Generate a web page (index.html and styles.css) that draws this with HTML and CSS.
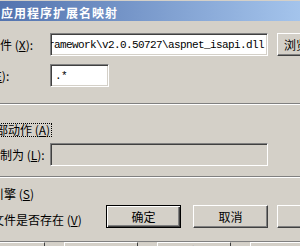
FILE: index.html
```html
<!DOCTYPE html>
<html lang="zh-CN">
<head>
    <meta charset="UTF-8">
    <title>应用程序扩展名映射</title>
    <link rel="stylesheet" href="styles.css">
</head>
<body>

    <!-- Dialog window -->
    <div class="window">
        <div class="titlebar">应用程序扩展名映射</div>

        <div class="form">
            <div class="row row-exe">
                <span class="label">可执行文件 (<u>X</u>):</span>
                <div class="edit wide"><span class="value">C:\WINDOWS\Microsoft.NET\Framework\v2.0.50727\aspnet_isapi.dll</span></div>
                <button class="btn browse">浏览(<u>B</u>)...</button>
            </div>

            <div class="row row-ext">
                <span class="label">扩展名 (<u>E</u>):</span>
                <div class="edit narrow"><span class="value">.*</span></div>
            </div>

            <div class="sep"></div>

            <div class="radio-row">
                <span class="focus">全部动作 (<u>A</u>)</span>
            </div>

            <div class="row row-limit">
                <span class="label limit">限制为 (<u>L</u>):</span>
                <div class="edit wide disabled"></div>
            </div>

            <div class="sep sep-low"></div>

            <!-- Checkboxes and dialog buttons -->
            <div class="bottom">
                <div class="checks">
                    <div class="check first">脚本引擎 (<u>S</u>)</div>
                    <div class="check">检查文件是否存在 (<u>V</u>)</div>
                </div>
                <div class="buttons">
                    <button class="btn default">确定</button>
                    <button class="btn cancel">取消</button>
                    <button class="btn help">帮助</button>
                </div>
            </div>
        </div>
    </div>

    <!-- Buttons of the window behind -->
    <div class="behind">
        <span class="back-btn">添加(D)...</span>
        <span class="back-btn">编辑(E)...</span>
        <span class="back-btn">删除(M)</span>
        <span class="back-btn">复制</span>
    </div>

</body>
</html>
```

FILE: styles.css
```css
/* General Reset */
* {
    margin: 0;
    padding: 0;
    box-sizing: border-box;
}

body {
    width: 300px;
    height: 246px;
    overflow: hidden;
    background-color: #d4d0c8;
    font-family: "Noto Sans CJK SC", sans-serif;
    font-size: 12px;
    color: #000;
}

u {
    text-decoration: underline;
    text-underline-offset: 1px;
}

/* Window */
.window {
    height: 242px;
    padding-top: 1px;
    border-bottom: 1px solid #808080;
}

.titlebar {
    height: 20px;
    padding: 4px 0 0 1px;
    line-height: 16px;
    font-weight: bold;
    letter-spacing: 1px;
    color: #fff;
    white-space: nowrap;
    background: linear-gradient(90deg, #5373ae, #a4c4ec);
}

/* Form area, the left part of the dialog is cut off */
.form {
    margin-left: -48px;
}

.row {
    display: flex;
    align-items: center;
    height: 23px;
}

.row-exe {
    margin-top: 12px;
}

.row-ext {
    margin-top: 8px;
}

.row-limit {
    margin-top: 8px;
}

.label {
    flex: none;
    width: 98px;
    white-space: nowrap;
}

.label.limit {
    padding-left: 36px;
}

/* Sunken edit boxes */
.edit {
    flex: none;
    height: 23px;
    display: flex;
    align-items: center;
    overflow: hidden;
    background-color: #fff;
    border: 1px solid;
    border-color: #808080 #fff #fff #808080;
    box-shadow: inset 1px 1px #404040, inset -1px -1px #d4d0c8;
    font-family: "Liberation Mono", monospace;
    font-size: 11px;
    letter-spacing: -0.6px;
    white-space: nowrap;
}

.edit.wide {
    width: 218px;
    justify-content: flex-end;
    padding-right: 3px;
}

.edit.narrow {
    width: 59px;
    padding-left: 4px;
}

.edit.disabled {
    background-color: #d4d0c8;
}

.sep {
    margin-top: 16px;
    height: 2px;
    border-top: 1px solid #808080;
    border-bottom: 1px solid #fff;
    margin-left: 48px;
}

.sep-low {
    margin-top: 10px;
}

.radio-row {
    margin-top: 16px;
    height: 14px;
    padding-left: 30px;
}

.focus {
    display: inline-block;
    height: 14px;
    line-height: 12px;
    padding: 0 1px;
    border: 1px dotted #000;
    white-space: nowrap;
}

/* Bottom part */
.bottom {
    display: flex;
}

.checks {
    flex: none;
    width: 154px;
    padding-left: 16px;
}

.check {
    height: 14px;
    line-height: 14px;
    margin-top: 12px;
    white-space: nowrap;
}

.check.first {
    margin-top: 9px;
}

.buttons {
    display: flex;
    margin-top: 27px;
}

/* Raised buttons */
.btn {
    flex: none;
    width: 75px;
    height: 23px;
    font-family: inherit;
    font-size: 12px;
    color: #000;
    background-color: #d4d0c8;
    border: 1px solid;
    border-color: #fff #404040 #404040 #fff;
    box-shadow: inset -1px -1px #808080;
    white-space: nowrap;
}

.btn.browse {
    margin-left: 9px;
    text-align: left;
    padding-left: 6px;
}

.btn.default {
    border-color: #000;
    box-shadow: inset 1px 1px #fff, inset -1px -1px #404040, inset -2px -2px #808080;
}

.btn.cancel {
    margin-left: 12px;
}

.btn.help {
    margin-left: 9px;
}

/* Window behind the dialog */
.behind {
    display: flex;
    gap: 19px;
    margin-left: -29px;
    height: 4px;
    overflow: hidden;
}

.back-btn {
    flex: none;
    width: 74px;
    height: 23px;
    padding-top: 3px;
    line-height: 12px;
    text-align: center;
    border-top: 1px solid #fff;
    border-left: 1px solid #fff;
    border-right: 1px solid #404040;
    white-space: nowrap;
}
```
